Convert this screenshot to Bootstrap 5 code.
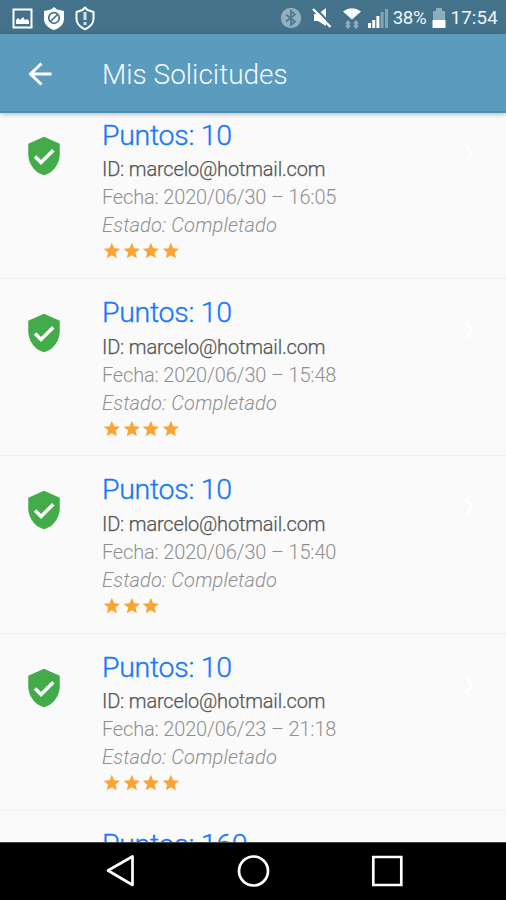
<!DOCTYPE html>
<html lang="es">
<head>
<meta charset="utf-8">
<meta name="viewport" content="width=device-width, initial-scale=1">
<title>Mis Solicitudes</title>
<link href="https://cdn.jsdelivr.net/npm/bootstrap@5.3.0/dist/css/bootstrap.min.css" rel="stylesheet">
<style>
body{font-family:Roboto,sans-serif;background:#fafafa}
svg{display:block;flex:none}
.status{height:34px;background:#44728b;color:#fff;font-size:18.7px;line-height:34px;padding:2px 8px 0 12px}
.status span{color:#edf4f7}
.level{letter-spacing:-.3px}
.clock{letter-spacing:.2px}
.battery{margin:0 4px 0 6px}
.appbar{height:79px;background:#5b9cbe;border-bottom:2px solid #4b90b3;padding:2px 0 0 25px;box-shadow:0 1px 5px rgba(60,35,45,.35);z-index:2}
.appbar h1{font-size:28px;font-weight:300;line-height:34px;margin:2px 0 0 47px;color:#f4f9fc}
.requests{min-height:0;list-style:none}
.request{height:177.2px;border-bottom:1px solid #f2f2f2;padding:17px 28px 0 23px}
.request:first-child{height:166.3px;padding-top:6.200px}
.shield{margin-top:16px}
.details{margin-left:37px;font-size:20px;line-height:28px;font-weight:300;color:#8f8f8f;letter-spacing:-.17px}
.details h2{font-size:28.5px;font-weight:300;line-height:34px;margin:0 0 2.300px;color:#1877fa;letter-spacing:-.3px;-webkit-text-stroke:.35px #1877fa}
.account{color:#555;-webkit-text-stroke:.25px #555}
.state{letter-spacing:.15px}
.stars{padding-top:3px}
.chev{margin-top:24px}
.navkeys{height:58px;background:#000;border-top:1px solid #444}
</style>
<script src="https://cdn.jsdelivr.net/npm/bootstrap@5.3.0/dist/js/bootstrap.bundle.min.js"></script>
</head>
<body>
<svg width="0" height="0" class="position-absolute">
<symbol id="shield" viewBox="0 0 24 24"><path fill="#43ab49" d="M12 1 3 5v6c0 5.550 3.840 10.740 9 12 5.160-1.260 9-6.450 9-12V5z"/><path fill="none" stroke="#fff" stroke-width="2" d="m6.900 12.300 3.400 3.400 7-7"/></symbol>
<symbol id="star" viewBox="1 1 22 22"><path fill="#fba434" d="M12 17.270 18.180 21l-1.640-7.030L22 9.240l-7.190-.61L12 2 9.190 8.630 2 9.240l5.460 4.730L5.820 21z"/></symbol>
<symbol id="chev" viewBox="0 0 12 22"><path fill="none" stroke="#fff" stroke-width="3" d="m2 2 6 8-6 8"/></symbol>
</svg>
<div class="vh-100 d-flex flex-column overflow-hidden">
<div class="status d-flex align-items-center flex-shrink-0">
<svg width="21" height="21" viewBox="0 0 21 21"><path fill="none" stroke="#fff" stroke-width="2" d="M1.500 1.500h18v18h-18z"/><path fill="#fff" d="M4 16v-4l2-2 2 2 3-3 2 3 2-1 2 2v3z"/></svg>
<svg class="ms-2 me-2" width="26" height="25" viewBox="0 0 26 25"><path fill="#fff" d="M13 1 16 3.500 23 5v8c0 5-4 9-10 11C7 22 3 18 3 13V5l7-1.500z"/><g fill="none" stroke="#44728b" stroke-width="1.700"><circle cx="13" cy="12" r="5.300"/><path d="m9.500 15.500 7-7"/></g></svg>
<svg width="20" height="25" viewBox="0 0 20 25"><path fill="none" stroke="#fff" stroke-width="2" stroke-linejoin="round" d="M10 1.500 12.500 4 18.500 6v7c0 4-3.500 8-8.500 10.300C5 21 1.500 17 1.500 13V6l6-2z"/><path stroke="#d2e0e7" stroke-width="3" d="M10 6v8M10 16v3"/></svg>
<svg class="ms-auto" width="22" height="22" viewBox="0 0 22 22"><circle cx="11" cy="11" r="10.200" fill="#92b1c0"/><path fill="none" stroke="#52798d" stroke-width="1.800" d="m6 7.500 9 7-4 3.500V4l4 3.500-9 7"/></svg>
<svg class="ms-2" width="27" height="22" viewBox="0 0 27 22"><path fill="#fff" d="M4 7h4l8-6v18l-8-5H4z"/><path stroke="#44728b" stroke-width="2" d="m5 .5 17 18"/><path stroke="#fff" stroke-width="2.300" d="m3 2 17.500 18"/></svg>
<svg class="ms-1" width="22" height="23" viewBox="0 0 22 23"><path fill="#fff" d="M2 4.500Q11-2 20 4.500l-9 8z"/><path fill="#91b0bf" d="m7 13 3 3.500H8.500v2H10l-3 3.500-3-3.500h1.500v-2H4zM15 13l3 3.500h-1.500v2H18l-3 3.500-3-3.500h1.500v-2H12z"/></svg>
<svg class="ms-1" width="22" height="21" viewBox="0 0 22 21"><path fill="#fff" d="M1 15h3v5H1zM5.200 12h3v8h-3zM9.400 8h3v12h-3z"/><path fill="#83a5b5" d="M13.600 4h3v16h-3zM18 1h3v19h-3z"/></svg>
<span class="level ms-1">38%</span>
<svg class="battery" width="14" height="20" viewBox="0 0 14 20"><path fill="#8bb0bc" d="M4 0h6v3h3v9H1V3h3z"/><path fill="#fff" d="M.5 12h13v8H.5z"/></svg>
<span class="clock">17:54</span>
</div>
<header class="appbar d-flex align-items-center flex-shrink-0 position-relative">
<svg width="30" height="30" viewBox="0 0 30 30"><path fill="none" stroke="#fff" stroke-width="3" d="M26.500 15H6M16.500 4.500 5.500 15l11 10.500"/></svg>
<h1>Mis Solicitudes</h1>
</header>
<ul class="requests flex-grow-1 overflow-hidden m-0 p-0" id="requests"></ul>
<nav class="navkeys flex-shrink-0 d-flex justify-content-center" aria-label="Sistema">
<svg width="506" height="57" viewBox="0 0 506 57" fill="none" stroke="#fff" stroke-width="2.700"><path stroke-linejoin="round" d="M108 27.500 132.500 13.500v28.500z"/><circle cx="253.500" cy="28" r="14.500"/><path d="M373.300 14h28v28h-28z"/></svg>
</nav>
</div>
<script>
const rows=[[10,'2020/06/30 – 16:05',4],[10,'2020/06/30 – 15:48',4],[10,'2020/06/30 – 15:40',3],[10,'2020/06/23 – 21:18',4],[160]];
document.getElementById('requests').innerHTML=rows.map(([points,date,stars])=>`
<li class="request d-flex align-items-start">
<svg class="shield" width="42" height="42" viewBox="0 0 24 24"><use href="#shield" width="24" height="24"/></svg>
<div class="details flex-grow-1 text-nowrap">
<h2>Puntos: ${points}</h2>
${date?`<div class="account">ID: marcelo@hotmail.com</div>
<div>Fecha: ${date}</div>
<div class="state fst-italic">Estado: Completado</div>
<div class="stars d-flex">${'<svg width="19.700" height="18"><use href="#star"/></svg>'.repeat(stars)}</div>`:''}
</div>
<svg class="chev" width="16" height="22"><use href="#chev"/></svg>
</li>`).join('');
</script>
</body>
</html>
